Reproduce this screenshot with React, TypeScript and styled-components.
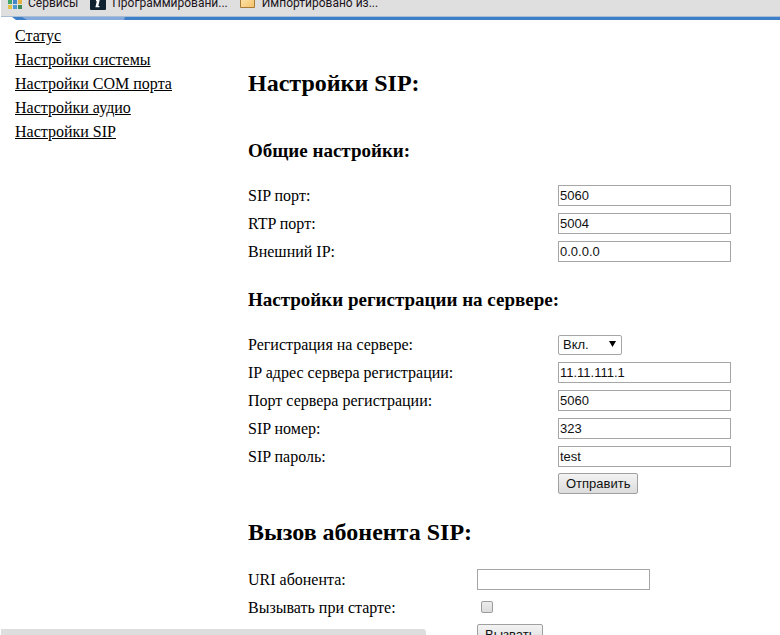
import React from "react";
import styled, { createGlobalStyle } from "styled-components";

const GlobalStyle = createGlobalStyle`
  * { box-sizing: border-box; }
  html, body { margin: 0; background: #fff; }
  body { overflow: hidden; }
`;

const Shell = styled.div`
  height: 100vh;
  overflow: hidden;
  display: flex;
  flex-direction: column;
  color: #000;
  font: 16px/24px "Liberation Serif", "Times New Roman", serif;
`;

const BookmarkBar = styled.nav`
  display: flex;
  align-items: flex-end;
  flex: none;
  height: 16px;
  margin-left: 1px;
  padding: 0 7px 4px;
  gap: 12px;
  overflow: hidden;
  background: #dfdfdf;
`;

const Bookmark = styled.a`
  display: flex;
  align-items: center;
  gap: 6px;
  flex: none;
  color: #1c1420;
  text-decoration: none;
  white-space: nowrap;
  font: 12px/18px Roboto, "Open Sans", sans-serif;
  svg { flex: none; margin-bottom: 2px; }
`;

const TabStrip = styled.div`
  flex: none;
  height: 4px;
  svg { display: block; width: 100%; height: 4px; }
`;

const Columns = styled.div`
  display: grid;
  grid-template-columns: 248px minmax(0, 1fr);
  flex: none;
`;

const SideMenu = styled.nav`
  display: flex;
  flex-direction: column;
  align-items: flex-start;
  padding: 4px 0 0 15px;
`;

const MenuLink = styled.a`
  color: #000;
  text-decoration: underline;
`;

const Content = styled.main`
  padding-top: 49px;
`;

const Title = styled.h1`
  margin: 0;
  font-size: 24px;
  line-height: 28px;
`;

const Subtitle = styled.h2<{ $gap: number }>`
  margin: ${(p) => p.$gap}px 0 20px;
  font-size: 19px;
  line-height: 22px;
`;

const Form = styled.form<{ $top?: number; $bottom?: number }>`
  margin: ${(p) => p.$top ?? 0}px 0 ${(p) => p.$bottom ?? 0}px;
`;

const Row = styled.div<{ $label: number }>`
  display: grid;
  grid-template-columns: ${(p) => p.$label}px minmax(0, 1fr);
  align-items: center;
  justify-items: start;
  height: 28px;
`;

const ButtonRow = styled.div<{ $label: number }>`
  padding: 2px 0 0 ${(p) => p.$label}px;
  display: flex;
`;

const TextInput = styled.input`
  width: 173px;
  height: 21px;
  margin-bottom: 1px;
  padding: 0 1px;
  border: 1px solid #a6a6a6;
  border-radius: 0;
  background: #fff;
  color: #111;
  outline: none;
  font: 13px/18px "Liberation Sans", Arial, sans-serif;
`;

const SelectBox = styled.span`
  display: grid;
  align-items: center;
  width: 64px;
  height: 19px;
  margin-bottom: 1px;
  > * { grid-area: 1 / 1; }
  svg { justify-self: end; margin: 0 6px 2px 0; pointer-events: none; }
`;

const Select = styled.select`
  appearance: none;
  width: 100%;
  height: 100%;
  padding: 0 4px;
  border: 1px solid #a6a6a6;
  border-radius: 2px;
  background: #fff;
  color: #111;
  font: 13px/18px "Liberation Sans", Arial, sans-serif;
`;

const Checkbox = styled.input`
  appearance: none;
  width: 12px;
  height: 12px;
  margin: 0 0 2px 4px;
  border: 1px solid #9c9c9c;
  border-radius: 2px;
  background: linear-gradient(#ececec, #dcdcdc);
  &:checked { background: #666; }
`;

const Button = styled.button`
  height: 21px;
  padding: 0 7px;
  border: 1px solid #a0a0a0;
  border-radius: 2px;
  background: linear-gradient(#f3f3f3, #dcdcdc);
  color: #111;
  font: 13px/18px "Liberation Sans", Arial, sans-serif;
`;

const StatusBubble = styled.div`
  position: fixed;
  left: 1px;
  bottom: 0;
  width: 425px;
  height: 6px;
  border-radius: 0 3px 0 0;
  background: #dedede;
`;

const GRID_COLORS = ["#d9534a", "#e8a33d", "#58a55c", "#3fa66b", "#4285c8", "#e3b341", "#e2c043", "#4a9bd4", "#3e8a55"];

const AppsIcon = () => (
  <svg width="14" height="14" viewBox="0 0 14 14" aria-hidden="true">
    {GRID_COLORS.map((color, i) => (
      <rect key={i} x={(i % 3) * 5} y={Math.floor(i / 3) * 5} width="4" height="4" fill={color} />
    ))}
  </svg>
);

const InfoIcon = () => (
  <svg width="16" height="16" viewBox="0 0 16 16" aria-hidden="true">
    <rect width="16" height="16" rx="1" fill="#10212f" />
    <path d="M8.3 2.4h2.3l-.5 2H7.8zM6.1 6h3.6l-1.4 6h1.3l-.3 1.3H5.4L6.8 7.3H5.8z" fill="#fff" />
  </svg>
);

const FolderIcon = () => (
  <svg width="16" height="16" viewBox="0 0 16 16" aria-hidden="true">
    <defs>
      <linearGradient id="folder" x1="0" y1="0" x2="1" y2="1">
        <stop offset="0" stopColor="#ffe9b4" />
        <stop offset="1" stopColor="#f3c169" />
      </linearGradient>
    </defs>
    <path d="M.5 13.5v-12h5l1.5 2h7.5v10z" fill="url(#folder)" stroke="#a87a35" />
  </svg>
);

type FieldProps = { id: string; label: string; value?: string; column?: number };

const Field = ({ id, label, value = "", column = 310 }: FieldProps) => (
  <Row $label={column}>
    <label htmlFor={id}>{label}</label>
    <TextInput id={id} type="text" defaultValue={value} />
  </Row>
);

const MENU = ["Статус", "Настройки системы", "Настройки COM порта", "Настройки аудио", "Настройки SIP"];

export default function App() {
  return (
    <Shell>
      <GlobalStyle />
      <BookmarkBar>
        <Bookmark href="#"><AppsIcon />Сервисы</Bookmark>
        <Bookmark href="#"><InfoIcon />Программировани...</Bookmark>
        <Bookmark href="#"><FolderIcon />Импортировано из...</Bookmark>
      </BookmarkBar>
      <TabStrip>
        <svg aria-hidden="true">
          <rect x="1" width="100%" height="1" fill="#a9bdd4" />
          <rect x="20" y="1" width="100%" height="3" fill="#3d7fc9" />
          <path d="M12 1h10v3h-6z" fill="#3d7fc9" />
          <path d="M22 1h103l-1 3H27z" fill="#86aadb" />
        </svg>
      </TabStrip>
      <Columns>
        <SideMenu>
          {MENU.map((item) => (
            <MenuLink key={item} href="#">{item}</MenuLink>
          ))}
        </SideMenu>
        <Content>
          <Title>Настройки SIP:</Title>
          <Form $bottom={24} onSubmit={(e) => e.preventDefault()}>
            <Subtitle $gap={43}>Общие настройки:</Subtitle>
            <Field id="sip-port" label="SIP порт:" value="5060" />
            <Field id="rtp-port" label="RTP порт:" value="5004" />
            <Field id="ext-ip" label="Внешний IP:" value="0.0.0.0" />
            <Subtitle $gap={23}>Настройки регистрации на сервере:</Subtitle>
            <Row $label={310}>
              <label htmlFor="reg">Регистрация на сервере:</label>
              <SelectBox>
                <Select id="reg" defaultValue="on">
                  <option value="on">Вкл.</option>
                  <option value="off">Выкл.</option>
                </Select>
                <svg width="7" height="6" viewBox="0 0 7 6" aria-hidden="true">
                  <path d="M0 0h7L3.5 6z" fill="#000" />
                </svg>
              </SelectBox>
            </Row>
            <Field id="reg-ip" label="IP адрес сервера регистрации:" value="11.11.111.1" />
            <Field id="reg-port" label="Порт сервера регистрации:" value="5060" />
            <Field id="sip-number" label="SIP номер:" value="323" />
            <Field id="sip-pass" label="SIP пароль:" value="test" />
            <ButtonRow $label={310}>
              <Button type="submit">Отправить</Button>
            </ButtonRow>
          </Form>
          <Title>Вызов абонента SIP:</Title>
          <Form $top={20} onSubmit={(e) => e.preventDefault()}>
            <Field id="uri" label="URI абонента:" column={229} />
            <Row $label={229}>
              <label htmlFor="autocall">Вызывать при старте:</label>
              <Checkbox id="autocall" type="checkbox" />
            </Row>
            <ButtonRow $label={229}>
              <Button type="submit">Вызвать</Button>
            </ButtonRow>
          </Form>
        </Content>
      </Columns>
      <StatusBubble />
    </Shell>
  );
}
